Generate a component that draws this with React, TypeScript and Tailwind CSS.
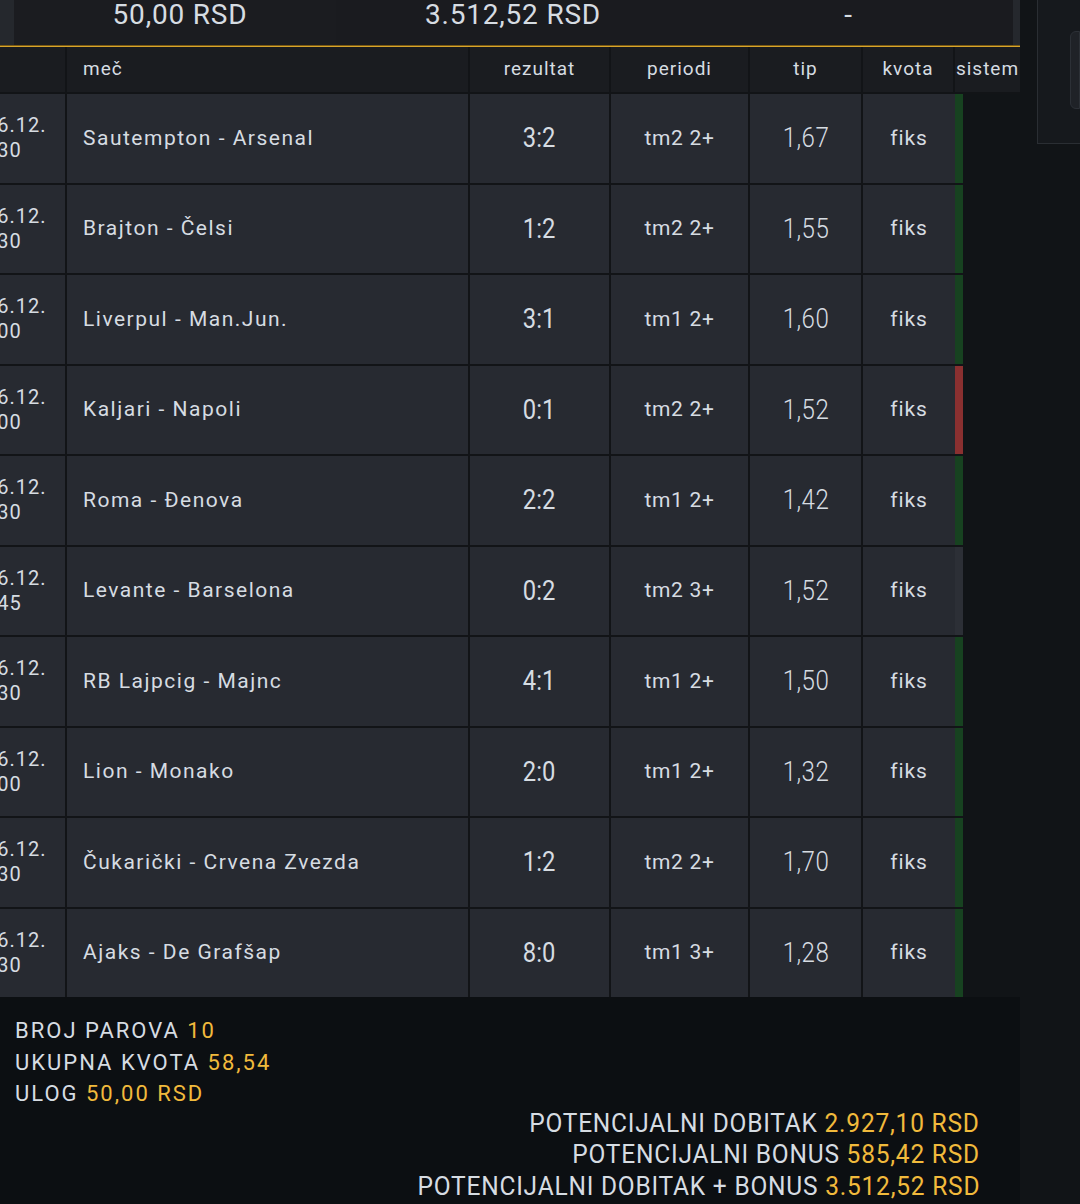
import React from 'react';

type Status = 'win' | 'lose' | 'none';

interface Pair {
  date: string;
  time: string;
  match: string;
  result: string;
  period: string;
  tip: string;
  status: Status;
}

const pairs: Pair[] = [
  { date: '16.12.', time: '20:30', match: 'Sautempton - Arsenal', result: '3:2', period: 'tm2 2+', tip: '1,67', status: 'win' },
  { date: '16.12.', time: '20:30', match: 'Brajton - Čelsi', result: '1:2', period: 'tm2 2+', tip: '1,55', status: 'win' },
  { date: '16.12.', time: '21:00', match: 'Liverpul - Man.Jun.', result: '3:1', period: 'tm1 2+', tip: '1,60', status: 'win' },
  { date: '16.12.', time: '21:00', match: 'Kaljari - Napoli', result: '0:1', period: 'tm2 2+', tip: '1,52', status: 'lose' },
  { date: '16.12.', time: '20:30', match: 'Roma - Đenova', result: '2:2', period: 'tm1 2+', tip: '1,42', status: 'win' },
  { date: '16.12.', time: '20:45', match: 'Levante - Barselona', result: '0:2', period: 'tm2 3+', tip: '1,52', status: 'none' },
  { date: '16.12.', time: '20:30', match: 'RB Lajpcig - Majnc', result: '4:1', period: 'tm1 2+', tip: '1,50', status: 'win' },
  { date: '16.12.', time: '21:00', match: 'Lion - Monako', result: '2:0', period: 'tm1 2+', tip: '1,32', status: 'win' },
  { date: '16.12.', time: '20:30', match: 'Čukarički - Crvena Zvezda', result: '1:2', period: 'tm2 2+', tip: '1,70', status: 'win' },
  { date: '16.12.', time: '20:30', match: 'Ajaks - De Grafšap', result: '8:0', period: 'tm1 3+', tip: '1,28', status: 'win' },
];

const stripClass: Record<Status, string> = {
  win: 'border-r-[#174220]',
  lose: 'border-r-[#8a3030]',
  none: 'border-r-[#2c2f36]',
};

const cell = 'bg-[#272a31] flex items-center';

export default function App() {
  return (
    <div className="w-[1080px] h-[1204px] bg-[#111417] flex overflow-hidden font-['Roboto',sans-serif] text-[#d6dce2]">
      {/* ticket */}
      <div className="w-[1020px] flex flex-col">
        {/* totals band */}
        <div className="h-[45px] flex bg-[#1b1c20] text-[28px] tracking-[0.8px] leading-[30px]">
          <div className="w-[14px] bg-[#25282d]" />
          <div className="w-[322px] flex justify-center pl-[10px]">50,00 RSD</div>
          <div className="w-[354px] flex justify-center bg-[#1a1b1f]">3.512,52 RSD</div>
          <div className="flex-1 flex justify-center pr-[6px] bg-[#1a1b1f]">-</div>
          <div className="w-[7px] bg-[#25282d]" />
        </div>
        <div className="h-[2px] bg-[#d8a52b] border-t border-[#7a5a14]" />

        {/* header */}
        <div className="h-[47px] flex gap-[2px] bg-[#121417] text-[19px] tracking-[1px] border-b-[2px] border-[#121417]">
          <div className="w-[65px] bg-[#1a1c20]" />
          <div className="w-[401px] bg-[#1a1c20] flex items-center pl-[16px]">meč</div>
          <div className="w-[139px] bg-[#1a1c20] flex items-center justify-center">rezultat</div>
          <div className="w-[137px] bg-[#1a1c20] flex items-center justify-center">periodi</div>
          <div className="w-[111px] bg-[#1a1c20] flex items-center justify-center">tip</div>
          <div className="w-[90px] bg-[#1a1c20] flex items-center justify-center">kvota</div>
          <div className="flex-1 bg-[#1a1c20] flex items-center justify-center">sistem</div>
        </div>

        {/* pairs */}
        <div className="w-[963px] flex flex-col gap-[2px] bg-[#121417]">
          {pairs.map((p, i) => (
            <div key={i} className="h-[88.5px] flex gap-[2px]">
              <div className={`${cell} w-[65px] overflow-hidden flex-col items-start justify-center text-[20px] leading-[25px] tracking-[1px]`}>
                <span className="ml-[-15px] whitespace-nowrap">{p.date}</span>
                <span className="ml-[-33px] whitespace-nowrap">{p.time}</span>
              </div>
              <div className={`${cell} w-[401px] pl-[16px] text-[21px] tracking-[1.5px]`}>{p.match}</div>
              <div className={`${cell} w-[139px] justify-center`}>
                <span className="text-[28px] scale-x-[0.85]">{p.result}</span>
              </div>
              <div className={`${cell} w-[137px] justify-center text-[21px] tracking-[0.7px]`}>{p.period}</div>
              <div className={`${cell} w-[111px] justify-center`}>
                <span className="text-[28px] font-light scale-x-[0.86] tracking-[0.5px]">{p.tip}</span>
              </div>
              <div className={`${cell} w-[100px] justify-center text-[21px] tracking-[0.9px] border-r-[8px] ${stripClass[p.status]}`}>fiks</div>
            </div>
          ))}
        </div>

        {/* summary */}
        <div className="flex-1 bg-[#0c0f12] pt-[18px] px-[15px] text-[22px] tracking-[2px] leading-[31.5px]">
          <div>BROJ PAROVA <span className="text-[#f1ba3c]">10</span></div>
          <div>UKUPNA KVOTA <span className="text-[#f1ba3c]">58,54</span></div>
          <div>ULOG <span className="text-[#f1ba3c]">50,00 RSD</span></div>
          <div className="mt-[-2px] pr-[25px] flex flex-col items-end text-[25px] tracking-[0.8px] leading-[31.5px]">
            <div className="origin-right scale-x-[0.98] whitespace-nowrap">POTENCIJALNI DOBITAK <span className="text-[#f1ba3c]">2.927,10 RSD</span></div>
            <div className="origin-right scale-x-[0.98] whitespace-nowrap">POTENCIJALNI BONUS <span className="text-[#f1ba3c]">585,42 RSD</span></div>
            <div className="origin-right scale-x-[0.98] whitespace-nowrap">POTENCIJALNI DOBITAK + BONUS <span className="text-[#f1ba3c]">3.512,52 RSD</span></div>
          </div>
        </div>
      </div>

      {/* side panel */}
      <div className="flex-1 pl-[17px]">
        <div className="h-[144px] bg-[#16191d] border-l border-b border-[#2a2e33] pt-[31px] pl-[32px]">
          <div className="h-[78px] bg-[#1f2227] border border-[#2c3036] rounded-l-[6px]" />
        </div>
      </div>
    </div>
  );
}
